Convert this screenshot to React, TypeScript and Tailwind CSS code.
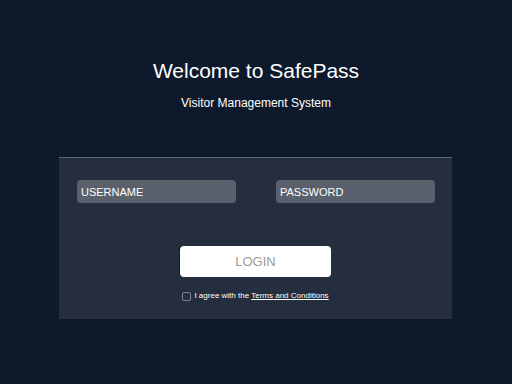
import { useState } from "react"

export default function App() {
  const [agree, setAgree] = useState(false)

  return (
    <div className="w-[512px] h-[384px] bg-[#0e1a2c] font-['Liberation_Sans',Arial,sans-serif] text-white overflow-hidden">
      <div className="pt-[57px] flex flex-col items-center">
        <h1 className="text-[21px] leading-[27px]">Welcome to SafePass</h1>
        <p className="mt-[11px] text-[12px] leading-[16px]">Visitor Management System</p>
      </div>

      <div className="mt-[46px] ml-[59px] w-[393px] h-[162px] bg-[#242e3e] border-t border-[#5d6778] pl-[18px] pr-[17px] pt-[22px]">
        <div className="flex justify-between">
          <input
            placeholder="USERNAME"
            className="w-[159px] h-[23px] rounded-[4px] bg-[#5a616d] px-[4px] text-[11px] text-white placeholder:text-white outline-none"
          />
          <input
            type="password"
            placeholder="PASSWORD"
            className="w-[159px] h-[23px] rounded-[4px] bg-[#5a616d] px-[4px] text-[11px] text-white placeholder:text-white outline-none"
          />
        </div>

        <div className="mt-[43px] -ml-[1px] flex flex-col items-center">
          <button className="w-[151px] h-[31px] rounded-[4px] bg-white text-[13px] text-[#9a9a9a] shadow-[-1px_0_0_#111827]">
            LOGIN
          </button>
          <label className="mt-[14px] flex items-center gap-[3px] text-[8px] leading-[10px]">
            <input
              type="checkbox"
              checked={agree}
              onChange={(e) => setAgree(e.target.checked)}
              className="appearance-none w-[9px] h-[9px] rounded-[2px] border border-[#7a8290] bg-transparent"
            />
            <span>
              I agree with the <span className="underline">Terms and Conditions</span>
            </span>
          </label>
        </div>
      </div>
    </div>
  )
}
